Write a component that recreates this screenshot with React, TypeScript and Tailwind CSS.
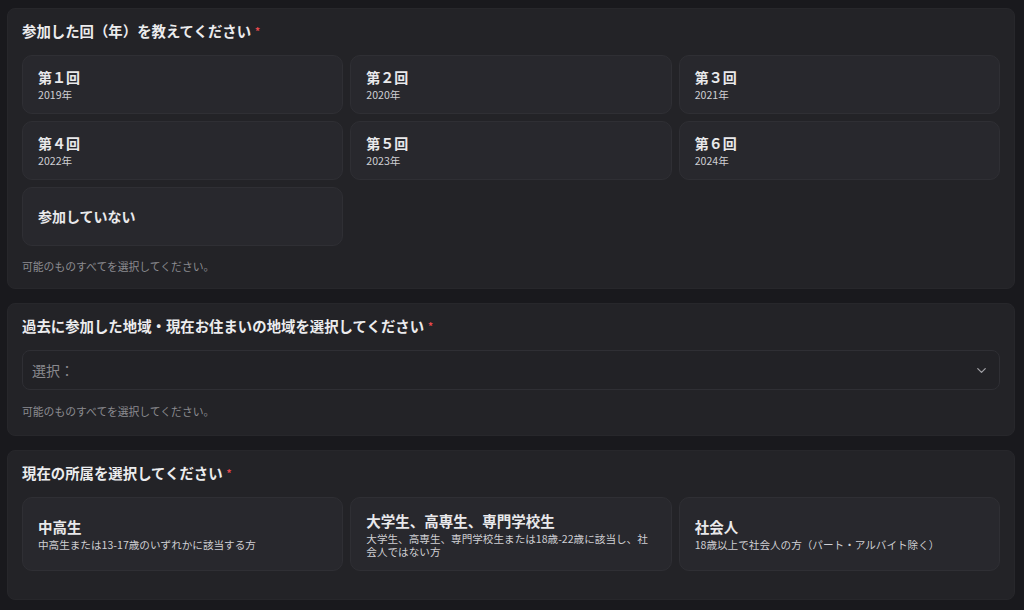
import { ChevronDown } from "lucide-react";

const rounds = [
    { title: "第１回", year: "2019年" },
    { title: "第２回", year: "2020年" },
    { title: "第３回", year: "2021年" },
    { title: "第４回", year: "2022年" },
    { title: "第５回", year: "2023年" },
    { title: "第６回", year: "2024年" },
];

const affiliations = [
    { title: "中高生", desc: "中高生または13-17歳のいずれかに該当する方" },
    {
        title: "大学生、高専生、専門学校生",
        desc: "大学生、高専生、専門学校生または18歳-22歳に該当し、社会人ではない方",
    },
    { title: "社会人", desc: "18歳以上で社会人の方（パート・アルバイト除く）" },
];

function Label({ children }: { children: React.ReactNode }) {
    return (
        <div className="flex items-start gap-[4px] text-[14.4px] leading-[20px] font-bold text-[#ececee]">
            <span>{children}</span>
            <span className="mt-[3px] text-[10px] leading-[14px] text-[#e5484d]">*</span>
        </div>
    );
}

function Helper() {
    return <p className="text-[10.8px] leading-[14px] text-[#8b8b90]">可能のものすべてを選択してください。</p>;
}

function Option({ title, sub, tall }: { title: string; sub?: string; tall?: boolean }) {
    return (
        <div
            className={`flex flex-col justify-center rounded-[10px] border border-[#2f2f34] bg-[#28282d] px-[15px] ${
                tall ? "min-h-[74px] py-[8px]" : "min-h-[59px] pt-[10px] pb-[11px]"
            }`}
        >
            <p className={`font-bold leading-[20px] text-[#e9e9eb] ${tall ? "text-[14.5px]" : "text-[14px]"}`}>{title}</p>
            {sub && <p className="mt-[1px] text-[10.6px] leading-[13px] text-[#cfcfd3]">{sub}</p>}
        </div>
    );
}

export default function App() {
    return (
        <div
            className="flex h-[610px] flex-col gap-[14px] overflow-hidden bg-[#19191d] pt-[8px] pr-[9px] pl-[7px]"
            style={{ fontFamily: '"Noto Sans CJK JP", "Noto Sans", sans-serif' }}
        >
            <section className="flex flex-col rounded-[8px] border border-[#27272b] bg-[#232327] px-[14px] pt-[12px] pb-[15px]">
                <Label>参加した回（年）を教えてください</Label>
                <div className="mt-[14px] grid grid-cols-3 gap-[7px]">
                    {rounds.map((r) => (
                        <Option key={r.title} title={r.title} sub={r.year} />
                    ))}
                    <Option title="参加していない" />
                </div>
                <div className="mt-[13px]">
                    <Helper />
                </div>
            </section>

            <section className="flex flex-col rounded-[8px] border border-[#27272b] bg-[#232327] px-[14px] pt-[12px] pb-[17px]">
                <Label>過去に参加した地域・現在お住まいの地域を選択してください</Label>
                <div className="mt-[14px] flex h-[40px] items-center justify-between rounded-[8px] border border-[#2f2f34] bg-[#222226] pr-[10px] pl-[9px]">
                    <span className="text-[14px] text-[#8a8a8f]">選択：</span>
                    <ChevronDown className="size-[15px] text-[#a0a0a5]" strokeWidth={2} />
                </div>
                <div className="mt-[14px]">
                    <Helper />
                </div>
            </section>

            <section className="flex flex-col rounded-[8px] border border-[#27272b] bg-[#232327] px-[14px] pt-[12px] pb-[28px]">
                <Label>現在の所属を選択してください</Label>
                <div className="mt-[14px] grid grid-cols-3 gap-[7px]">
                    {affiliations.map((a) => (
                        <Option key={a.title} title={a.title} sub={a.desc} tall />
                    ))}
                </div>
            </section>
        </div>
    );
}
